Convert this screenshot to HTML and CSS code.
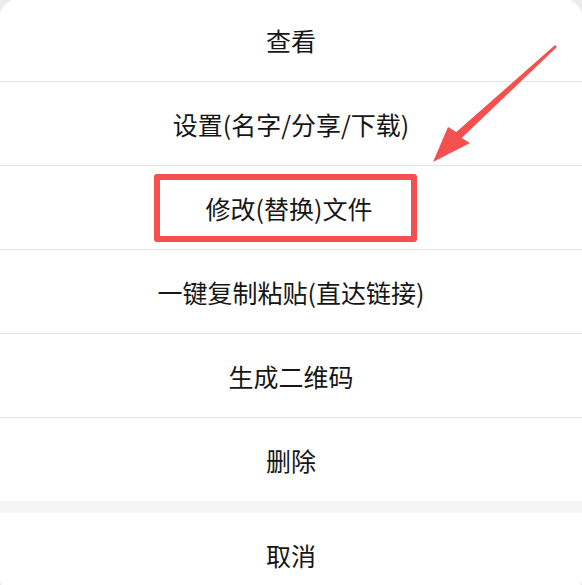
FILE: index.html
```html
<!doctype html>
<html>
    <head>
        <title>操作菜单</title>
        <link rel="stylesheet" href="styles.css">
    </head>
    <body>
        <main class="sheet">
            <ul class="actions">
                <li class="action">查看</li>
                <li class="action">设置(名字/分享/下载)</li>
                <li class="action">
                    <span class="marked">修改(替换)文件</span>
                </li>
                <li class="action">一键复制粘贴(直达链接)</li>
                <li class="action">生成二维码</li>
                <li class="action">删除</li>
            </ul>
            <div class="cancel">取消</div>
        </main>

        <svg class="pointer" width="582" height="585" viewBox="0 0 582 585">
            <polygon fill="#f45050"
                points="555.1,45.1 556.9,46.9 461.7,137.9 470,143 433,162 448,127 456.3,132.1" />
        </svg>
    </body>
</html>
```

FILE: styles.css
```css
:root {
    font-family: 'Noto Sans CJK SC', 'Noto Sans', sans-serif;

    --page-bg: #ececec;
    --sheet-bg: #ffffff;
    --gap-bg: #f5f5f5;
    --line: #e4e4e4;
    --text: #161616;
    --mark: #f45050;

    --row-height: 83px;
    --font-size: 25px;
}

html, body {
    margin: 0;
    height: 100%;
    overflow: hidden;
    background: var(--page-bg);
}

.sheet {
    display: block;
    margin: -2px -1px 0 -1px;
    background: var(--sheet-bg);
    border-radius: 22px;
    overflow: hidden;
}

.actions {
    list-style: none;
    margin: 0;
    padding: 0;
    border-bottom: 12px solid var(--gap-bg);
}

.action,
.cancel {
    display: flex;
    align-items: center;
    justify-content: center;
    height: var(--row-height);
    font-size: var(--font-size);
    color: var(--text);
}

.action + .action {
    border-top: 1px solid var(--line);
}

.marked {
    display: flex;
    align-items: center;
    justify-content: center;
    box-sizing: border-box;
    width: 263px;
    height: 68px;
    margin-left: -12px;
    padding-left: 8px;
    border: 6px solid var(--mark);
    border-radius: 3px;
}

.pointer {
    position: absolute;
    left: 0;
    top: 0;
    pointer-events: none;
}
```
